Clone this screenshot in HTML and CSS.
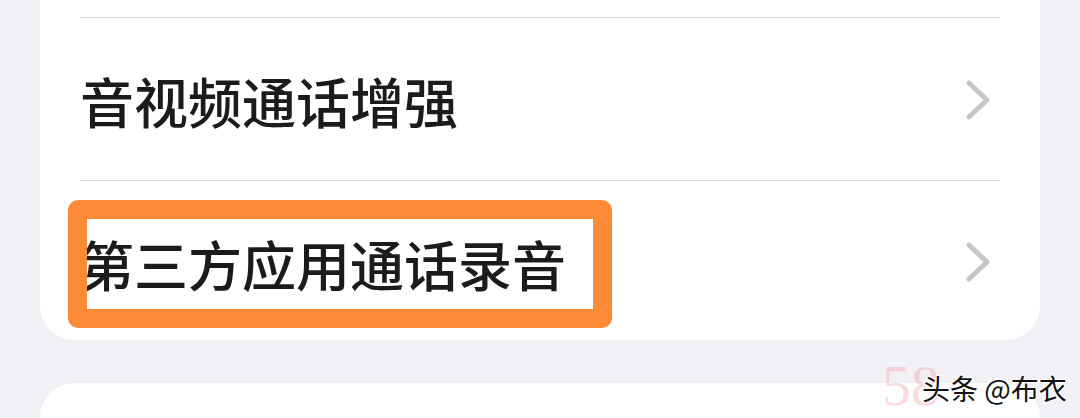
FILE: index.html
```html
<!DOCTYPE html>
<html lang="zh-CN">
<head>
    <meta charset="UTF-8">
    <meta name="viewport" content="width=device-width, initial-scale=1.0">
    <title>通话设置</title>
    <link rel="stylesheet" href="styles.css">
</head>
<body>
    <div class="card">
        <div class="row row-prev"></div>
        <div class="row">
            <span class="label">音视频通话增强</span>
            <svg class="chevron" viewBox="0 0 26 40" width="26" height="40">
                <path d="M4 3 L22 20 L4 37" fill="none" stroke="#c6c6c8" stroke-width="5" stroke-linecap="round" stroke-linejoin="round"/>
            </svg>
        </div>
        <div class="row row-last">
            <span class="label">第三方应用通话录音</span>
            <div class="highlight"></div>
            <svg class="chevron" viewBox="0 0 26 40" width="26" height="40">
                <path d="M4 3 L22 20 L4 37" fill="none" stroke="#c6c6c8" stroke-width="5" stroke-linecap="round" stroke-linejoin="round"/>
            </svg>
        </div>
    </div>

    <div class="card card-next"></div>

    <div class="watermark">
        <span class="wm-back">58</span>
        <span class="wm-front">头条 @布衣</span>
    </div>
</body>
</html>
```

FILE: styles.css
```css
body {
    margin: 0;
    padding: 0;
    background-color: #f1f1f5;
    font-family: "Noto Sans CJK SC", "Noto Sans", sans-serif;
    height: 418px;
    overflow: hidden;
    position: relative;
}
.card {
    width: 1000px;
    margin: -30px 0 0 40px;
    background-color: #fff;
    border-radius: 0 0 34px 34px;
    padding: 0 40px;
    box-sizing: border-box;
}
.row {
    position: relative;
    display: flex;
    align-items: center;
    justify-content: space-between;
    height: 162px;
    border-top: 1px solid #dedee0;
}
.row-prev {
    height: 47px;
    border-top: none;
}
.row-last {
    height: 159px;
}
.label {
    font-size: 54px;
    font-weight: 500;
    color: #1b1b1b;
    line-height: 1;
    margin-top: 4px;
}
.row-last .label {
    margin-top: 6px;
}
.chevron {
    margin-right: 9px;
    margin-top: 2px;
}
.highlight {
    position: absolute;
    left: -12px;
    top: 19px;
    width: 506px;
    height: 90px;
    border: 19px solid #fd8a36;
    border-radius: 10px;
}
.card-next {
    margin-top: 43px;
    height: 35px;
    border-radius: 34px 34px 0 0;
}
.watermark {
    position: absolute;
    left: 880px;
    top: 358px;
    width: 200px;
    height: 60px;
}
.wm-back {
    position: absolute;
    left: 2px;
    top: -4px;
    font-family: "Liberation Serif", serif;
    font-size: 58px;
    line-height: 1.1;
    color: #f4a6ae;
    opacity: 0.4;
    white-space: nowrap;
}
.wm-front {
    position: absolute;
    left: 42px;
    top: 14px;
    font-size: 28px;
    line-height: 1.2;
    color: #111;
    white-space: nowrap;
    text-shadow: 1px 1px 0 #fff, -1px -1px 0 #fff, 1px -1px 0 #fff, -1px 1px 0 #fff;
}
```
